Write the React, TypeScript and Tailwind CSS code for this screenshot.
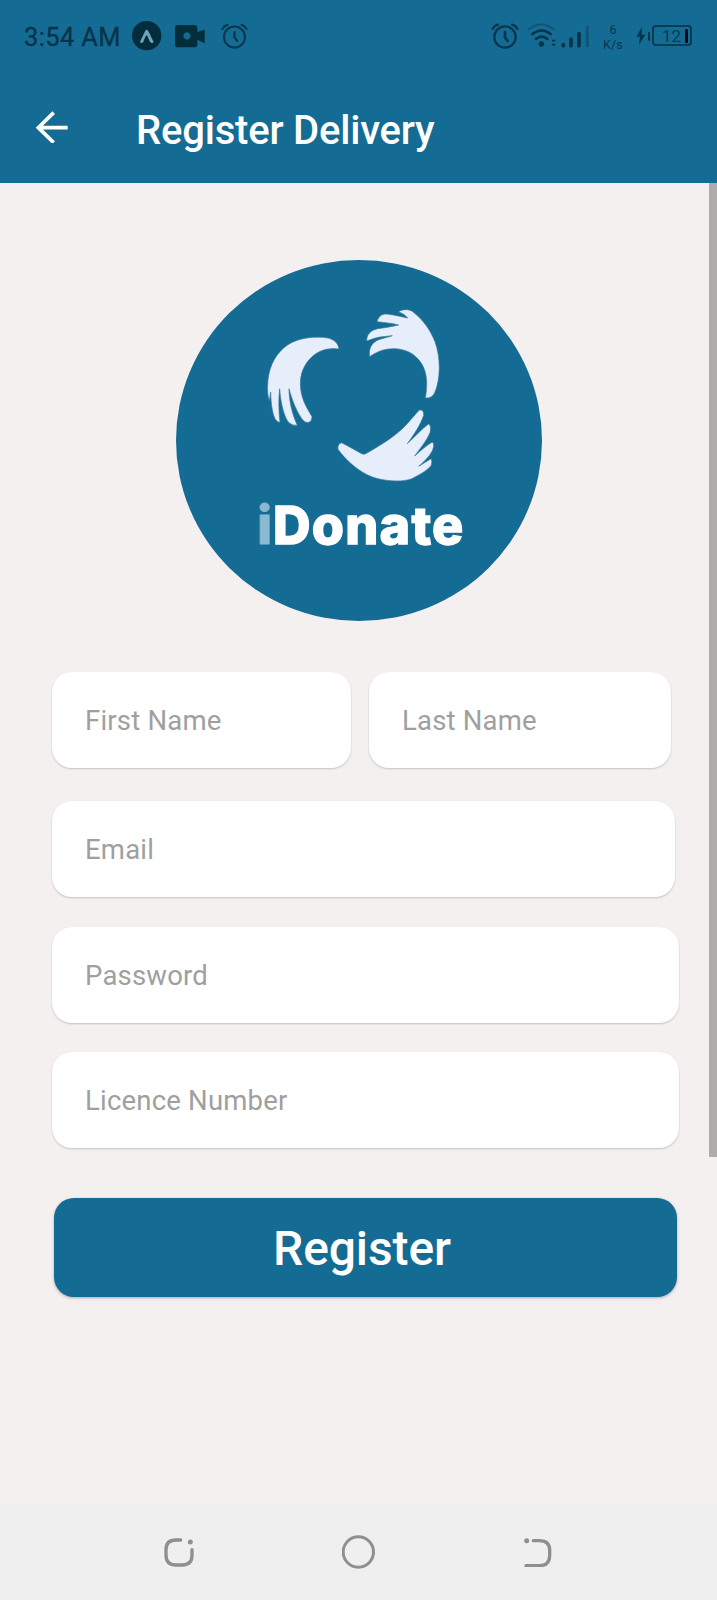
import React from "react";

const INK = "#06344b";

function AlarmIcon({ className, heavy = false }: { className: string; heavy?: boolean }) {
  return (
    <svg viewBox="0 0 82 78" className={className} fill="none" stroke="#08374e" strokeWidth={heavy ? 7 : 6} strokeLinecap="round">
      <circle cx="41" cy="42" r="32" />
      <path d="M41 27v16l8 11" strokeWidth={heavy ? 8 : 7} />
      <path d="M4 18Q9 8 20 5M78 18Q73 8 62 5" />
    </svg>
  );
}

function StatusBar() {
  return (
    <div className="flex h-[73px] items-start justify-between">
      <div className="flex items-start">
        <span className="ml-[24px] mt-[22px] w-[97px] whitespace-nowrap text-[25.5px] leading-[30px] tracking-[0.35px] text-[#06344b] [-webkit-text-stroke:0.3px_#06344b]">3:54 AM</span>
        <svg viewBox="0 0 90 90" className="ml-[11px] mt-[21px] h-[30px] w-[30px]">
          <circle cx="44" cy="44" r="44" fill="#032c3c" />
          <path d="M24 63C30 50 36 36 40 29Q44 24 48 29C53 37 59 51 65 63Q60 70 54 62C50 53 47 47 46 44Q44 42 42 44C39 48 37 55 34 62Q28 70 24 63Z" fill="#6fa6bf" />
        </svg>
        <svg viewBox="0 0 90 69" className="ml-[13px] mt-[25px] h-[23px] w-[30px]" fill="#032c3c">
          <path fillRule="evenodd" d="M9 0h49q9 0 9 9v12L89 14v41L67 44v15q0 8-9 8H9q-9 0-9-8V9q0-9 9-9ZM36 22a11 11 0 1 0 .1 0Z" />
        </svg>
        <AlarmIcon className="ml-[16px] mt-[23px] h-[26px] w-[27px]" />
      </div>
      <div className="flex items-start">
        <AlarmIcon heavy className="mt-[23px] h-[26px] w-[28px]" />
        <svg viewBox="0 0 186 78" className="ml-[9px] mt-[23px] h-[26px] w-[62px]" fill="none" strokeLinecap="round">
          <path d="M3 19Q40-10 77 19" stroke="#0f557a" strokeWidth="6" />
          <path d="M13 33Q41 12 68 33" stroke={INK} strokeWidth="8" />
          <path d="M24 48Q41 34 58 48" stroke={INK} strokeWidth="8" />
          <circle cx="40" cy="63" r="8" fill={INK} />
          <path d="M74 53h6M74 65h6" stroke={INK} strokeWidth="5" />
          <path d="M106 65v3M129 48v20M153 32v36" stroke={INK} strokeWidth="11" />
          <path d="M178 13v55" stroke="#0f557a" strokeWidth="9" />
        </svg>
        <div className="ml-[9px] mt-[22px] flex w-[28px] flex-col items-center text-[12.5px] leading-[15px] tracking-[0.2px] text-[#06344b]">
          <span>6</span>
          <span>K/s</span>
        </div>
        <svg viewBox="0 0 30 54" className="ml-[9px] mt-[27px] h-[18px] w-[10px]">
          <path d="M18 0L1 29h11l-3 24L28 23H17Z" fill={INK} />
        </svg>
        <span className="ml-[2px] mt-[32px] h-[9px] w-[2px] rounded-sm bg-[#06344b]" />
        <div className="ml-[2px] mr-[25px] mt-[25px] flex h-[21px] w-[40px] items-center rounded-[4px] border-2 border-[#0a3c54]">
          <span className="ml-[8px] mt-px w-[23px] text-[17px] leading-[17px] text-[#0a3c54]">12</span>
          <span className="h-[14px] w-[3px] rounded-[1px] bg-[#020a10]" />
        </div>
      </div>
    </div>
  );
}

function Logo() {
  return (
    <svg viewBox="48 60 1098 1083" className="ml-[176px] mt-[77px] h-[361px] w-[366px]">
      <ellipse cx="597" cy="601.5" rx="549" ry="541.5" fill="#146b94" />
      <g transform="translate(240 150)" fill="#e6eefc" stroke="#3c7898" strokeWidth="2" strokeLinejoin="round">
        <path d="M297 177C294 156 278 144 248 142C205 140 164 146 132 173C101 199 84 240 83 285C82 302 83 318 88 332L92 306C93 342 97 371 106 388Q112 397 120 397C116 365 115 328 119 296C122 338 131 374 144 395Q156 408 172 406C157 374 147 334 147 296C158 337 173 370 189 391Q198 400 207 397Q216 392 216 380C195 345 181 320 181 278C182 232 213 188 259 178Q279 174 297 177Z" />
        <path d="M389 200C385 176 395 158 416 149L457 137L420 141C405 144 391 149 380 153C380 130 394 121 413 116C432 114 454 110 476 105C453 98 431 98 411 95C416 77 429 70 445 73C466 75 485 81 503 84C496 75 486 69 476 66C484 57 507 57 517 64C551 91 570 119 585 155C603 205 601 268 585 306Q577 326 556 324C565 276 560 235 535 208C516 186 493 178 465 176C434 175 410 185 389 200Z" />
        <path d="M294 478Q292 462 304 458L318 465L365 491Q373 495 381 489C423 465 468 437 496 407C512 390 527 372 538 360Q552 358 551 376C542 404 520 437 502 461C525 440 548 414 566 402Q575 407 570 428C560 452 540 476 524 498C542 482 561 465 577 456Q585 463 577 482C567 502 549 517 536 529L573 506Q578 514 573 527C557 546 538 553 516 566C484 578 432 573 397 561C355 545 319 512 294 478Z" />
      </g>
      <text x="292" y="913" fontFamily="Inter, sans-serif" fontWeight="800" fontSize="157" fill="#8bb9d0" stroke="#8bb9d0" strokeWidth="3">i</text>
      <text x="339" y="913" fontFamily="Inter, sans-serif" fontWeight="800" fontSize="156" fill="#ffffff" stroke="#ffffff" strokeWidth="4" textLength="571">Donate</text>
    </svg>
  );
}

function Field({ label, className }: { label: string; className: string }) {
  return (
    <div className={`flex h-[96px] items-center rounded-[20px] bg-white pl-[33px] text-[27.5px] leading-[32px] tracking-[0.2px] text-[#9f9f9f] shadow-[0_1px_2px_rgba(0,0,0,0.2)] ${className}`}>
      <span className="mt-[2px] whitespace-nowrap">{label}</span>
    </div>
  );
}

export default function App() {
  return (
    <div className="flex h-[1600px] w-[717px] flex-col overflow-hidden bg-[#f4f0ef] font-[Roboto,sans-serif]">
      <header className="h-[183px] shrink-0 bg-[#146b94]">
        <StatusBar />
        <div className="flex items-start">
          <svg viewBox="0 0 99 96" className="ml-[35px] mt-[38px] h-[32px] w-[33px]" fill="none" stroke="#fff" strokeWidth="11">
            <path d="M98 50H9M56 5L10 50L56 95" />
          </svg>
          <h1 className="ml-[68px] mt-[34px] whitespace-nowrap text-[40px] font-medium leading-[47px] tracking-[-0.2px] text-white">Register Delivery</h1>
        </div>
      </header>
      <main className="flex min-h-0 flex-1 justify-between">
        <div className="w-[700px]">
          <Logo />
          <div className="ml-[52px] mt-[51px] flex gap-[18px]">
            <Field label="First Name" className="w-[299px]" />
            <Field label="Last Name" className="w-[302px]" />
          </div>
          <Field label="Email" className="ml-[52px] mt-[33px] w-[623px]" />
          <Field label="Password" className="ml-[52px] mt-[30px] w-[627px]" />
          <Field label="Licence Number" className="ml-[52px] mt-[29px] w-[627px]" />
          <button className="ml-[54px] mt-[50px] flex h-[99px] w-[623px] items-center justify-center rounded-[20px] bg-[#146b94] pr-[7px] text-[48px] font-medium leading-[56px] tracking-[-0.1px] text-white shadow-[0_1px_3px_rgba(0,0,0,0.3)]">
            <span className="mt-[3px]">Register</span>
          </button>
        </div>
        <div className="h-[974px] w-[8px] bg-[#b0acab]" />
      </main>
      <nav className="flex h-[96px] shrink-0 items-start bg-[#efefef]">
        <svg viewBox="0 0 90 90" className="ml-[164px] mt-[33px] h-[30px] w-[30px]" fill="none" stroke="#8f8f8f" strokeWidth="10" strokeLinecap="round">
          <path d="M50 9H36Q6 9 6 38V53Q6 84 36 84H55Q84 84 84 55V38" />
          <circle cx="79" cy="15" r="7.5" fill="#8f8f8f" stroke="none" />
        </svg>
        <svg viewBox="0 0 102 102" className="ml-[148px] mt-[31px] h-[34px] w-[34px]" fill="none" stroke="#8f8f8f" strokeWidth="9">
          <circle cx="49" cy="51" r="45.5" />
        </svg>
        <svg viewBox="0 0 90 90" className="ml-[146px] mt-[33px] h-[30px] w-[30px]" fill="none" stroke="#8f8f8f" strokeWidth="10" strokeLinecap="round">
          <path d="M34 11H52Q83 11 83 40V56Q83 86 52 86H12" />
          <circle cx="14" cy="11" r="7.5" fill="#8f8f8f" stroke="none" />
        </svg>
      </nav>
    </div>
  );
}
